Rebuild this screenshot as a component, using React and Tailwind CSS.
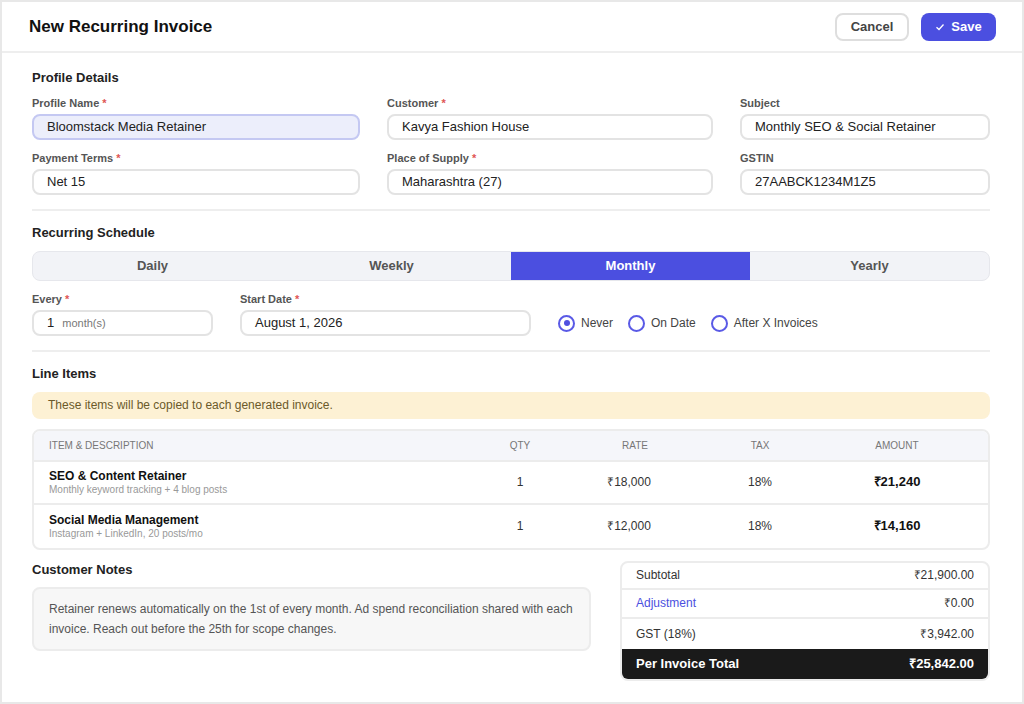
export default function App() {
  const F = { fontFamily: '"Liberation Sans", Arial, sans-serif' };
  const Label = ({ t, req }) => (
    <div className="text-[11px] font-bold text-[#555] mb-[4px] h-[13px] leading-[13px]">
      {t}{req && <span className="text-[#e05555]"> *</span>}
    </div>
  );
  const Input = ({ v, hl }) => (
    <div className={`h-[26px] rounded-lg border-2 px-[13px] flex items-center text-[13px] text-[#222] ${hl ? "bg-[#eceefb] border-[#c4c8f2]" : "bg-white border-[#e3e3e3]"}`}>{v}</div>
  );
  const Radio = ({ on, t }) => (
    <div className="flex items-center gap-[6px] text-[12px] text-[#444]">
      <span className="w-[17px] h-[17px] rounded-full border-2 border-[#5a5ae6] flex items-center justify-center">
        {on && <span className="w-[6px] h-[6px] rounded-full bg-[#4f4fe0]" />}
      </span>
      {t}
    </div>
  );
  const rows = [
    ["SEO & Content Retainer", "Monthly keyword tracking + 4 blog posts", "₹18,000", "₹21,240"],
    ["Social Media Management", "Instagram + LinkedIn, 20 posts/mo", "₹12,000", "₹14,160"],
  ];
  const cols = "grid grid-cols-[436px_70px_160px_90px_1fr] items-center";
  return (
    <div style={F} className="w-[1024px] h-[704px] bg-[#e8e8e8] p-[2px]">
      <div className="w-full h-full bg-white flex flex-col">
        <div className="h-[51px] border-b-2 border-[#eeeeee] flex items-center justify-between pl-[27px] pr-[26px]">
          <div className="text-[17px] font-bold text-[#111]">New Recurring Invoice</div>
          <div className="flex gap-[12px]">
            <div className="h-[28px] w-[74px] rounded-lg border-2 border-[#dedede] flex items-center justify-center text-[13px] font-bold text-[#444]">Cancel</div>
            <div className="h-[28px] w-[75px] rounded-lg bg-[#4b4fe0] flex items-center justify-center gap-[6px] text-[13px] font-bold text-white">
              <svg width="10" height="10" viewBox="0 0 10 10" fill="none" stroke="white" strokeWidth="1.3"><path d="M1.5 5.2 L4 7.5 L8.5 2.5" /></svg>
              Save
            </div>
          </div>
        </div>
        <div className="px-[30px] pt-[15px] flex flex-col">
          <div className="text-[13px] font-bold text-[#222] mb-[9px]">Profile Details</div>
          <div className="grid grid-cols-[328px_326px_1fr] gap-x-[27px] gap-y-[12px] pr-[2px]">
            <div><Label t="Profile Name" req /><Input v="Bloomstack Media Retainer" hl /></div>
            <div><Label t="Customer" req /><Input v="Kavya Fashion House" /></div>
            <div><Label t="Subject" /><Input v="Monthly SEO & Social Retainer" /></div>
            <div><Label t="Payment Terms" req /><Input v="Net 15" /></div>
            <div><Label t="Place of Supply" req /><Input v="Maharashtra (27)" /></div>
            <div><Label t="GSTIN" /><Input v="27AABCK1234M1Z5" /></div>
          </div>
          <div className="h-[2px] bg-[#eeeeee] mt-[14px] mr-[2px]" />
          <div className="text-[13px] font-bold text-[#222] mt-[12px] mb-[9px]">Recurring Schedule</div>
          <div className="grid grid-cols-4 h-[30px] rounded-lg bg-[#f2f3f7] border border-[#e6e7ec] overflow-hidden text-[13px] font-bold text-[#555] mr-[2px]">
            <div className="flex items-center justify-center">Daily</div>
            <div className="flex items-center justify-center">Weekly</div>
            <div className="flex items-center justify-center bg-[#4b4fe0] text-white">Monthly</div>
            <div className="flex items-center justify-center">Yearly</div>
          </div>
          <div className="flex items-end mt-[12px] gap-[27px]">
            <div className="w-[181px]"><Label t="Every" req />
              <div className="h-[26px] rounded-lg border-2 border-[#e3e3e3] px-[13px] flex items-center gap-[8px] text-[13px] text-[#222]">1 <span className="text-[11px] text-[#777]">month(s)</span></div>
            </div>
            <div className="w-[291px]"><Label t="Start Date" req /><Input v="August 1, 2026" /></div>
            <div className="flex gap-[15px] h-[26px] items-center">
              <Radio on t="Never" /><Radio t="On Date" /><Radio t="After X Invoices" />
            </div>
          </div>
          <div className="h-[2px] bg-[#eeeeee] mt-[14px] mr-[2px]" />
          <div className="text-[13px] font-bold text-[#222] mt-[12px] mb-[8px]">Line Items</div>
          <div className="h-[27px] rounded-lg bg-[#fdf1d4] flex items-center px-[16px] text-[12px] text-[#6b5a2a] mr-[2px]">These items will be copied to each generated invoice.</div>
          <div className="mt-[10px] rounded-lg border-2 border-[#ececec] overflow-hidden mr-[2px]">
            <div className={`${cols} h-[31px] bg-[#f5f6fa] border-b-2 border-[#ececec] text-[10px] text-[#777] px-[15px]`}>
              <div>ITEM &amp; DESCRIPTION</div><div className="text-center">QTY</div><div className="text-center">RATE</div><div className="text-center">TAX</div><div className="text-center pl-[16px]">AMOUNT</div>
            </div>
            {rows.map((r, i) => (
              <div key={i} className={`${cols} h-[43px] px-[15px] ${i === 0 ? "border-b-2 border-[#ececec]" : ""}`}>
                <div><div className="text-[12px] font-bold text-[#111] leading-[15px]">{r[0]}</div><div className="text-[10px] text-[#999] leading-[12px]">{r[1]}</div></div>
                <div className="text-center text-[12px] text-[#333]">1</div>
                <div className="text-center text-[12px] text-[#333] pr-[12px]">{r[2]}</div>
                <div className="text-center text-[12px] text-[#333]">18%</div>
                <div className="text-center pl-[16px] text-[13px] font-bold text-[#111]">{r[3]}</div>
              </div>
            ))}
          </div>
          <div className="flex justify-between mt-[11px] mr-[2px]">
            <div className="w-[559px]">
              <div className="text-[13px] font-bold text-[#222] mt-[-1px] mb-[8px]">Customer Notes</div>
              <div className="rounded-lg border-2 border-[#ececec] bg-[#f7f7f7] px-[15px] py-[10px] text-[12px] leading-[20px] text-[#555]">
                Retainer renews automatically on the 1st of every month. Ad spend reconciliation shared with each invoice. Reach out before the 25th for scope changes.
              </div>
            </div>
            <div className="w-[370px] rounded-lg border-2 border-[#ececec] overflow-hidden text-[12px]">
              <div className="h-[27px] flex justify-between items-center px-[14px] border-b-2 border-[#ececec] text-[#333]"><span>Subtotal</span><span>₹21,900.00</span></div>
              <div className="h-[29px] flex justify-between items-center px-[14px] border-b-2 border-[#ececec]"><span className="text-[#4b4fe0]">Adjustment</span><span className="text-[#333]">₹0.00</span></div>
              <div className="h-[30px] flex justify-between items-center px-[14px] text-[#333]"><span>GST (18%)</span><span>₹3,942.00</span></div>
              <div className="h-[30px] flex justify-between items-center px-[14px] bg-[#1a1a1a] text-white font-bold text-[13px]"><span>Per Invoice Total</span><span>₹25,842.00</span></div>
            </div>
          </div>
        </div>
      </div>
    </div>
  );
}
